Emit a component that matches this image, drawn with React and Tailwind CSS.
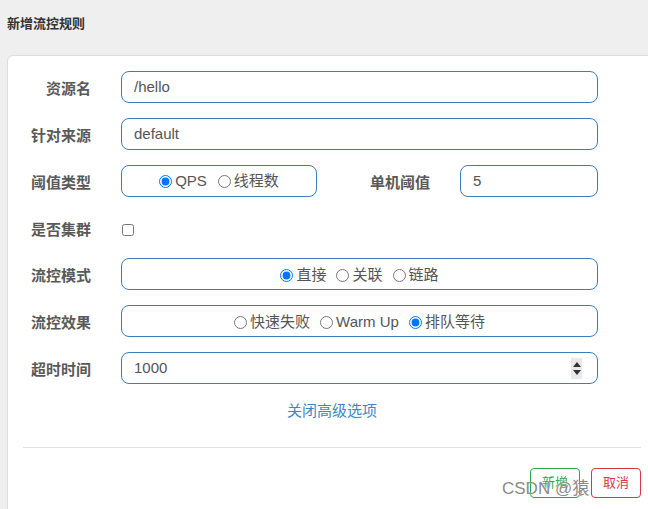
import React from "react";

const font = { fontFamily: '"Liberation Sans", "Noto Sans CJK SC", sans-serif' };

function Label({ children, w = "w-[68px]" }) {
  return (
    <div className={`${w} shrink-0 text-right text-[15px] font-bold text-[#595959] leading-[20px] pt-[3px]`}>
      {children}
    </div>
  );
}

function Radio({ checked, children, className = "" }) {
  return (
    <label className={`flex items-center gap-[3px] ${className}`}>
      <input type="radio" checked={checked} readOnly className="m-0 w-[13px] h-[13px]" />
      <span>{children}</span>
    </label>
  );
}

const boxCls =
  "h-[32px] border border-[#3a7ebf] rounded-[8px] bg-white flex items-center text-[15px] text-[#555]";

export default function App() {
  return (
    <div className="w-[648px] h-[509px] overflow-hidden bg-[#efefef] relative" style={font}>
      <div className="h-[55px] pl-[7px] pt-[15px] text-[13px] leading-[18px] font-bold text-[#333]">
        新增流控规则
      </div>
      <div className="ml-[7px] w-[650px] h-[470px] bg-white border border-[#dcdcdc] rounded-t-[6px] px-[15px] pt-[15px]">
        <div className="flex items-center mb-[15px]">
          <Label>资源名</Label>
          <div className={`${boxCls} ml-[30px] w-[477px] pl-[12px]`}>/hello</div>
        </div>
        <div className="flex items-center mb-[15px]">
          <Label>针对来源</Label>
          <div className={`${boxCls} ml-[30px] w-[477px] pl-[12px]`}>default</div>
        </div>
        <div className="flex items-center mb-[15px]">
          <Label>阈值类型</Label>
          <div className={`${boxCls} ml-[30px] w-[196px] justify-center text-[14px] gap-[11px]`}>
            <Radio checked>QPS</Radio>
            <Radio checked={false}>线程数</Radio>
          </div>
          <Label w="w-[113px]">单机阈值</Label>
          <div className={`${boxCls} ml-[30px] w-[138px] pl-[12px]`}>5</div>
        </div>
        <div className="flex items-center h-[32px] mb-[14px]">
          <Label>是否集群</Label>
          <input type="checkbox" readOnly className="m-0 ml-[31px] mt-[3px] w-[12px] h-[12px]" />
        </div>
        <div className="flex items-center mb-[15px]">
          <Label>流控模式</Label>
          <div className={`${boxCls} ml-[30px] w-[477px] justify-center text-[14px] gap-[10px] pt-[3px]`}>
            <Radio checked>直接</Radio>
            <Radio checked={false}>关联</Radio>
            <Radio checked={false}>链路</Radio>
          </div>
        </div>
        <div className="flex items-center mb-[15px]">
          <Label>流控效果</Label>
          <div className={`${boxCls} ml-[30px] w-[477px] justify-center text-[14px] gap-[10px] pt-[3px]`}>
            <Radio checked={false}>快速失败</Radio>
            <Radio checked={false}>Warm Up</Radio>
            <Radio checked>排队等待</Radio>
          </div>
        </div>
        <div className="flex items-center">
          <Label>超时时间</Label>
          <div className={`${boxCls} ml-[30px] w-[477px] pl-[12px] pr-[15px] justify-between text-[14px]`}>
            <span>1000</span>
            <div className="w-[11px] h-[21px] bg-[#e9e9e9] flex flex-col items-center justify-center gap-[3px]">
              <div className="w-0 h-0 border-l-[4px] border-r-[4px] border-b-[5px] border-l-transparent border-r-transparent border-b-[#333]" />
              <div className="w-0 h-0 border-l-[4px] border-r-[4px] border-t-[5px] border-l-transparent border-r-transparent border-t-[#333]" />
            </div>
          </div>
        </div>
        <div className="w-[618px] mt-[17px] text-center text-[15px] leading-[20px] text-[#3a87c8]">
          关闭高级选项
        </div>
        <div className="w-[618px] mt-[26px] border-t border-[#e3e3e3]" />
        <div className="w-[618px] mt-[20px] flex justify-end gap-[11px]">
          <button className="w-[50px] h-[30px] border border-[#28a745] rounded-[4px] bg-white text-[13px] text-[#28a745]">
            新增
          </button>
          <button className="w-[50px] h-[30px] border border-[#dc3545] rounded-[4px] bg-white text-[13px] text-[#dc3545]">
            取消
          </button>
        </div>
      </div>
      <div
        className="absolute left-[502px] top-[478px] text-[17px] leading-[22px] text-[#8a8a8a] pointer-events-none"
        style={{ textShadow: "0 0 1px #fff" }}
      >
        CSDN @猿
      </div>
    </div>
  );
}
